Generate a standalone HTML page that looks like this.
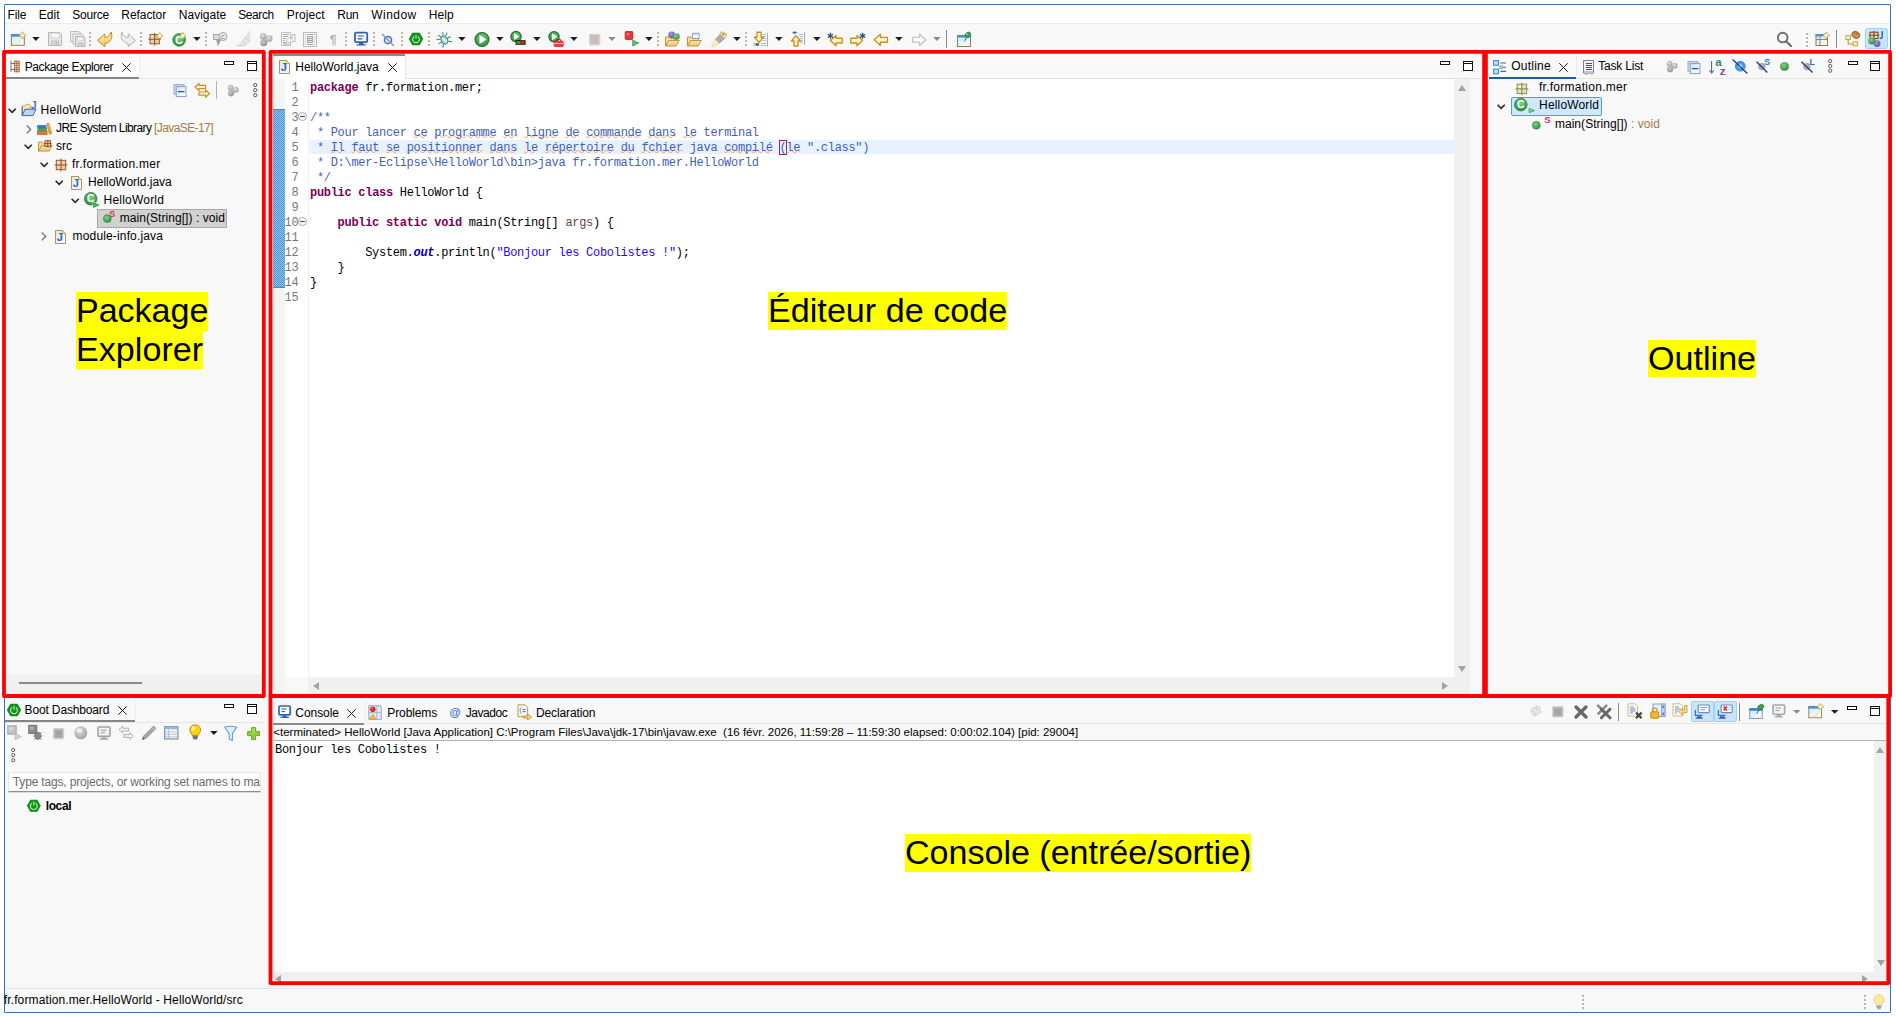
<!DOCTYPE html>
<html lang="fr"><head><meta charset="utf-8"><title>Eclipse IDE - HelloWorld</title>
<style>
html,body{margin:0;padding:0;background:#fff;}
body{width:1896px;height:1016px;position:relative;overflow:hidden;font-family:"Liberation Sans", sans-serif;}
body>div,body>svg,body>span,body>pre{position:absolute;display:block;}
.t{white-space:pre;font-family:"Liberation Sans", sans-serif;}
.m{font-family:"Liberation Mono", monospace;}
svg{overflow:visible;}
</style></head>
<body>
<div style="left:4px;top:4px;width:1885px;height:1007px;border:1px solid #3d6eb5;background:#f8f8f8;border-radius:1px"></div>
<div style="left:5px;top:5px;width:1885px;height:18px;background:#ffffff;"></div>
<div style="left:5px;top:23px;width:1885px;height:1px;background:#ececec;"></div>
<div style="left:6px;top:54px;width:133px;height:23px;background:#fbfbfb;"></div>
<div style="left:5px;top:78px;width:260px;height:1px;background:#e9e9e9;"></div>
<div style="left:6px;top:77px;width:133px;height:2px;background:#858585;"></div>
<div style="left:139px;top:54px;width:1px;height:23px;background:#ededed;"></div>
<div style="left:6px;top:675px;width:256px;height:18px;background:#f0f0f0;"></div>
<div style="left:19px;top:682px;width:123px;height:2px;background:#8a8a8a;"></div>
<div style="left:97px;top:209px;width:128px;height:17px;background:#d1d1d1;border:1px solid #a9a9a9"></div>
<div style="left:273px;top:54px;width:1209px;height:24px;background:#f8f8f8;"></div>
<div style="left:273px;top:78px;width:1209px;height:1px;background:#e2e2e2;"></div>
<div style="left:273px;top:79px;width:1181px;height:598px;background:#ffffff;"></div>
<div style="left:273px;top:79px;width:12px;height:615px;background:#f4f4f4;"></div>
<div style="left:308px;top:79px;width:1px;height:598px;background:#f3f3f3;"></div>
<div style="left:285px;top:677px;width:23px;height:17px;background:#f8f8f8;"></div>
<div style="left:1454px;top:79px;width:16px;height:615px;background:#f0f0f0;"></div>
<div style="left:308px;top:677px;width:1146px;height:17px;background:#f0f0f0;"></div>
<div style="left:1470px;top:79px;width:12px;height:615px;background:#f8f8f8;"></div>
<div style="left:273px;top:54px;width:132px;height:25px;background:#ffffff;"></div>
<div style="left:273px;top:54px;width:132px;height:2px;background:#8a8a8a;"></div>
<div style="left:405px;top:56px;width:1px;height:22px;background:#e6e6e6;"></div>
<div style="left:309px;top:139.5px;width:1145px;height:14.5px;background:#e8f2fe;"></div>
<svg style="left:273px;top:109px" width="12" height="179" viewBox="0 0 12 179"><defs><pattern id="dz" width="2" height="2" patternUnits="userSpaceOnUse"><rect width="2" height="2" fill="#8fc0ea"/><rect width="1" height="1" fill="#4f97d8"/><rect x="1" y="1" width="1" height="1" fill="#4f97d8"/></pattern></defs><rect width="12" height="179" fill="url(#dz)"/><rect width="12" height="1" fill="#3f87cf"/><rect y="178" width="12" height="1" fill="#3f87cf"/></svg>
<div style="left:1488px;top:78px;width:400px;height:1px;background:#e6e6e6;"></div>
<div style="left:1489px;top:77px;width:87px;height:2px;background:#1f56b8;"></div>
<div style="left:1576px;top:56px;width:1px;height:20px;background:#e9e9e9;"></div>
<div style="left:1511px;top:97px;width:89px;height:17px;background:#cde8ff;border:1px solid #4f9be6;border-radius:2px"></div>
<div style="left:5px;top:722px;width:260px;height:1px;background:#e6e6e6;"></div>
<div style="left:5px;top:720px;width:130px;height:2px;background:#858585;"></div>
<div style="left:135px;top:699px;width:1px;height:21px;background:#ededed;"></div>
<div style="left:8px;top:772px;width:251px;height:18px;background:#ffffff;border:1px solid #e6e6e6;border-bottom:1px solid #8e8e8e;box-shadow:0 1px 0 #dcdcdc"></div>
<div style="left:273px;top:723px;width:1613px;height:1px;background:#e6e6e6;"></div>
<div style="left:273px;top:723px;width:91px;height:2px;background:#8a8a8a;"></div>
<div style="left:365px;top:701px;width:1px;height:20px;background:#ededed;"></div>
<div style="left:273px;top:740px;width:1613px;height:1px;background:#b2b2b2;"></div>
<div style="left:273px;top:741px;width:1601px;height:231px;background:#ffffff;"></div>
<div style="left:1874px;top:741px;width:12px;height:231px;background:#f0f0f0;"></div>
<div style="left:273px;top:972px;width:1613px;height:13px;background:#f0f0f0;"></div>
<div style="left:1691px;top:701px;width:21px;height:19px;background:#cce4f7;border:1px solid #99d1ff;border-radius:2px"></div>
<div style="left:1714px;top:701px;width:21px;height:19px;background:#cce4f7;border:1px solid #99d1ff;border-radius:2px"></div>
<div style="left:5px;top:988px;width:1885px;height:1px;background:#e4e4e4;"></div>
<div style="left:267px;top:698px;width:1px;height:290px;background:#efefef;"></div>
<div style="left:1865px;top:28px;width:21px;height:19px;background:#cce4f7;border:1px solid #99d1ff;border-radius:3px"></div>
<svg style="left:0;top:0" width="0" height="0"><defs>
<linearGradient id="gWin" x1="0" y1="0" x2="1" y2="1"><stop offset="0" stop-color="#cfe6f8"/><stop offset="1" stop-color="#ffffff"/></linearGradient>
<linearGradient id="gYel" x1="0" y1="0" x2="0" y2="1"><stop offset="0" stop-color="#fff0ba"/><stop offset="1" stop-color="#f5c252"/></linearGradient>
<linearGradient id="gFold" x1="0" y1="0" x2="0" y2="1"><stop offset="0" stop-color="#fbe7b0"/><stop offset="1" stop-color="#eec66e"/></linearGradient>
<radialGradient id="gGrn" cx=".4" cy=".35" r=".7"><stop offset="0" stop-color="#7fd08a"/><stop offset="1" stop-color="#2e8b3d"/></radialGradient>
<radialGradient id="gPur" cx=".4" cy=".35" r=".7"><stop offset="0" stop-color="#a99ae0"/><stop offset="1" stop-color="#5b4aa8"/></radialGradient>
<radialGradient id="gGry" cx=".4" cy=".35" r=".7"><stop offset="0" stop-color="#e0e0e0"/><stop offset="1" stop-color="#9e9e9e"/></radialGradient>
<radialGradient id="gGry2" cx=".4" cy=".35" r=".7"><stop offset="0" stop-color="#c8c8c8"/><stop offset="1" stop-color="#8e8e8e"/></radialGradient>
<radialGradient id="gRun" cx=".5" cy=".4" r=".65"><stop offset="0" stop-color="#7fd088"/><stop offset=".7" stop-color="#3f9f4c"/><stop offset="1" stop-color="#2a8036"/></radialGradient>
</defs></svg>
<svg style="left:10px;top:31px" width="16" height="16" viewBox="0 0 16 16"><rect x="1.4" y="3.5" width="12.9" height="10.8" fill="url(#gWin)" stroke="#8f7e52"/><rect x=".9" y="3" width="13.9" height="2.7" fill="#4892d4"/><path d="M4 13.6C8.5 13.2 10.6 10.6 11 7" stroke="#f4e2a8" stroke-width="1.3" fill="none"/><path d="M12.6 0.9000000000000004L14.0 3.0L16.1 4.4L14.0 5.800000000000001L12.6 7.9L11.2 5.800000000000001L9.1 4.4L11.2 3.0Z" fill="#fff8d6" stroke="#c9a03c" stroke-width=".9" stroke-linejoin="round"/></svg>
<svg style="left:32.3px;top:37px" width="8" height="5" viewBox="0 0 8 5"><path d="M.2 0H7.6L3.9 4.1Z" fill="#1c1c1c"/></svg>
<svg style="left:46.8px;top:31px" width="16" height="16" viewBox="0 0 16 16"><path d="M1.5 1.5H13L14.5 3V14.5H1.5Z" fill="#e6e6e6" stroke="#b6b6b6"/><rect x="4" y="2" width="8" height="5" fill="#f6f6f6" stroke="#c8c8c8" stroke-width=".7"/><rect x="4.5" y="10" width="7" height="4.5" fill="#d6d6d6" stroke="#b6b6b6" stroke-width=".7"/><rect x="8.5" y="11" width="1.6" height="2.6" fill="#bdbdbd"/></svg>
<svg style="left:69.6px;top:31px" width="16" height="16" viewBox="0 0 16 16"><path d="M.5 .5H9L10.5 2V10.5H.5Z" fill="#ededed" stroke="#bcbcbc"/><path d="M3 3H11.5L13 4.5V13H3Z" fill="#ededed" stroke="#bcbcbc"/><path d="M5.5 5.5H13.5L15 7V15.5H5.5Z" fill="#e6e6e6" stroke="#b6b6b6"/><rect x="7.5" y="6" width="5.5" height="3.5" fill="#f6f6f6" stroke="#c8c8c8" stroke-width=".6"/><rect x="8" y="12" width="5" height="3.5" fill="#d2d2d2" stroke="#b6b6b6" stroke-width=".6"/></svg>
<svg style="left:89px;top:32px" width="2" height="16" viewBox="0 0 2 16"><rect x="0" y="0" width="2" height="2" fill="#bfb49c"/><rect x="0" y="4" width="2" height="2" fill="#bfb49c"/><rect x="0" y="8" width="2" height="2" fill="#bfb49c"/><rect x="0" y="12" width="2" height="2" fill="#bfb49c"/></svg>
<svg style="left:97px;top:31px" width="16" height="16" viewBox="0 0 16 16"><path d="M.5 9.4L7.8 2.9V6.5C10.6 6.6 13.2 4.6 14 1C16.4 6.4 13.4 12 7.8 12.4V15.8Z" fill="url(#gYel)" stroke="#c08a2c" stroke-width="1" stroke-linejoin="round"/></svg>
<svg style="left:119.6px;top:31px" width="16" height="16" viewBox="0 0 16 16"><path d="M15.5 9.4L8.2 2.9V6.5C5.4 6.6 2.8 4.6 2 1C-.4 6.4 2.6 12 8.2 12.4V15.8Z" fill="#ececec" stroke="#b2b2b2" stroke-width="1" stroke-linejoin="round"/></svg>
<svg style="left:140px;top:32px" width="2" height="16" viewBox="0 0 2 16"><rect x="0" y="0" width="2" height="2" fill="#bfb49c"/><rect x="0" y="4" width="2" height="2" fill="#bfb49c"/><rect x="0" y="8" width="2" height="2" fill="#bfb49c"/><rect x="0" y="12" width="2" height="2" fill="#bfb49c"/></svg>
<svg style="left:147.6px;top:31px" width="16" height="16" viewBox="0 0 16 16"><rect x="2.04" y="3.54" width="9.32" height="9.32" fill="#ecd0a4" stroke="#8f4e28" stroke-width=".9"/><path d="M6.70 1.9V14.5M0.4 8.20H13.0" stroke="#8f4e28" stroke-width="1"/><rect x="2.94" y="4.44" width="2.86" height="2.86" fill="#fff" opacity=".35"/><path d="M11.6 1.5L12.92 3.4799999999999995L14.899999999999999 4.8L12.92 6.12L11.6 8.1L10.28 6.12L8.3 4.8L10.28 3.4799999999999995Z" fill="#fff8d6" stroke="#c9a03c" stroke-width=".9" stroke-linejoin="round"/></svg>
<svg style="left:171.6px;top:31px" width="16" height="16" viewBox="0 0 16 16"><circle cx="7.1" cy="8.9" r="6.3" fill="url(#gRun)" stroke="#2b7d36" stroke-width=".8"/><text x="7.1" y="12.65" font-size="10.5" font-weight="bold" fill="#fff" text-anchor="middle" font-family="'Liberation Sans',sans-serif">C</text><path d="M10.8 1.5L12.120000000000001 3.4799999999999995L14.100000000000001 4.8L12.120000000000001 6.12L10.8 8.1L9.48 6.12L7.500000000000001 4.8L9.48 3.4799999999999995Z" fill="#fff8d6" stroke="#c9a03c" stroke-width=".9" stroke-linejoin="round"/></svg>
<svg style="left:192.6px;top:37px" width="8" height="5" viewBox="0 0 8 5"><path d="M.2 0H7.6L3.9 4.1Z" fill="#1c1c1c"/></svg>
<svg style="left:205px;top:32px" width="2" height="16" viewBox="0 0 2 16"><rect x="0" y="0" width="2" height="2" fill="#bfb49c"/><rect x="0" y="4" width="2" height="2" fill="#bfb49c"/><rect x="0" y="8" width="2" height="2" fill="#bfb49c"/><rect x="0" y="12" width="2" height="2" fill="#bfb49c"/></svg>
<svg style="left:212px;top:31px" width="16" height="16" viewBox="0 0 16 16"><rect x="1.5" y="3.5" width="7" height="5" fill="#dcdcdc" stroke="#a8a8a8"/><circle cx="11" cy="5.5" r="4" fill="#ececec" stroke="#a2a2a2"/><text x="11" y="8" font-size="6" font-weight="bold" fill="#9a9a9a" text-anchor="middle" font-family="'Liberation Sans',sans-serif">C</text><path d="M4 8.5H9L6 15.5Z" fill="#9e9e9e"/></svg>
<svg style="left:234.6px;top:31px" width="16" height="16" viewBox="0 0 16 16"><path d="M3.6 14.4L14.8 .6V10L10.6 14.4Z" fill="#e6e6e6" stroke="#d0d0d0" stroke-width=".6"/><path d="M9.4 7.2L14.8 9.6M7 10.2L11 14" stroke="#cfcfcf" stroke-width=".8"/><path d="M.4 14.8H9" stroke="#cfcfcf"/></svg>
<svg style="left:257.6px;top:31px" width="16" height="16" viewBox="0 0 16 16"><circle cx="5.2" cy="5.4" r="3.3" fill="url(#gGry)"/><circle cx="11.2" cy="7.6" r="3.3" fill="url(#gGry)"/><circle cx="5.8" cy="11.8" r="3.5" fill="url(#gGry2)"/></svg>
<svg style="left:280px;top:31px" width="16" height="16" viewBox="0 0 16 16"><path d="M1.5 1.5H10.5V14.5H1.5Z" fill="#fbfbfb" stroke="#c2c2c2"/><path d="M3 3.5H9M3 5.5H8M3 7.5H6M3 9.5H5M3 11.5H7M3 13H9" stroke="#a8a8a8" stroke-width="1"/><path d="M12 3.5H15V10.5H10.5V13L6.2 9.2L10.5 5.4V7.8H12Z" fill="#f6f6f6" stroke="#b4b4b4" stroke-width=".9" stroke-linejoin="round"/></svg>
<svg style="left:302px;top:31px" width="16" height="16" viewBox="0 0 16 16"><rect x="1.5" y="1.5" width="13" height="14" fill="#f6f6f6" stroke="#bcbcbc"/><path d="M4.5 3.5H11.5M4.5 13.5H11.5" stroke="#b0b0b0"/><rect x="5.5" y="5.5" width="5" height="6" fill="#e4e4e4" stroke="#a8a8a8"/><path d="M6 7.5H10M6 9.5H10" stroke="#a0a0a0"/><path d="M3.3 3V14M12.7 3V14" stroke="#b8b8b8" stroke-width="1" stroke-dasharray="1 1.2"/></svg>
<svg style="left:324.6px;top:31px" width="16" height="16" viewBox="0 0 16 16"><text x="8.2" y="12.8" font-size="12.5" font-weight="bold" fill="#b2b2b2" text-anchor="middle" font-family="'Liberation Sans',sans-serif">¶</text></svg>
<svg style="left:345px;top:32px" width="2" height="16" viewBox="0 0 2 16"><rect x="0" y="0" width="2" height="2" fill="#bfb49c"/><rect x="0" y="4" width="2" height="2" fill="#bfb49c"/><rect x="0" y="8" width="2" height="2" fill="#bfb49c"/><rect x="0" y="12" width="2" height="2" fill="#bfb49c"/></svg>
<svg style="left:352.6px;top:31px" width="16" height="16" viewBox="0 0 16 16"><rect x="2" y="1.6" width="12.2" height="9.6" rx="1.2" fill="#ffffff" stroke="#2f62ad" stroke-width="1.8"/><path d="M4.6 5H11M4.6 7.8H9.4" stroke="#34528f" stroke-width="1.2"/><path d="M6 12H10.4V13.2H6Z M3.6 13.2H12.8V14.4H3.6Z" fill="#2f62ad"/></svg>
<svg style="left:373px;top:32px" width="2" height="16" viewBox="0 0 2 16"><rect x="0" y="0" width="2" height="2" fill="#bfb49c"/><rect x="0" y="4" width="2" height="2" fill="#bfb49c"/><rect x="0" y="8" width="2" height="2" fill="#bfb49c"/><rect x="0" y="12" width="2" height="2" fill="#bfb49c"/></svg>
<svg style="left:380.4px;top:31px" width="16" height="16" viewBox="0 0 16 16"><circle cx="8" cy="9" r="3.6" fill="#d7e6f6" stroke="#3c78c0" stroke-width="1.5"/><path d="M2 3L14 15" stroke="#8a8f98" stroke-width="1.3"/></svg>
<svg style="left:401px;top:32px" width="2" height="16" viewBox="0 0 2 16"><rect x="0" y="0" width="2" height="2" fill="#bfb49c"/><rect x="0" y="4" width="2" height="2" fill="#bfb49c"/><rect x="0" y="8" width="2" height="2" fill="#bfb49c"/><rect x="0" y="12" width="2" height="2" fill="#bfb49c"/></svg>
<svg style="left:408px;top:31px" width="16" height="16" viewBox="0 0 16 16"><polygon points="14.90,8.00 11.45,13.98 4.55,13.98 1.10,8.00 4.55,2.02 11.45,2.02" fill="#0c9216" stroke="#0a8212" stroke-width=".6" stroke-linejoin="round"/><path d="M5.9 5.6A3.4 3.4 0 1 0 10.1 5.6" fill="none" stroke="#bfe9c5" stroke-width="1.1" stroke-linecap="round"/><path d="M8 4V7.4" stroke="#bfe9c5" stroke-width="1.1" stroke-linecap="round"/></svg>
<svg style="left:428px;top:32px" width="2" height="16" viewBox="0 0 2 16"><rect x="0" y="0" width="2" height="2" fill="#bfb49c"/><rect x="0" y="4" width="2" height="2" fill="#bfb49c"/><rect x="0" y="8" width="2" height="2" fill="#bfb49c"/><rect x="0" y="12" width="2" height="2" fill="#bfb49c"/></svg>
<svg style="left:436.4px;top:31px" width="16" height="16" viewBox="0 0 16 16"><g transform="rotate(-32 8.4 9)"><path d="M5.6 6.4L2.2 4.4M11.2 6.4L14.6 4.4M5.2 9.2H1.4M11.6 9.2H15.4M5.8 12L2.8 14.6M11 12L14 14.6M7.2 5L5.8 1.6M9.6 5L11 1.6" stroke="#2c7f96" stroke-width="1"/><ellipse cx="8.4" cy="9" rx="3.1" ry="4.3" fill="#b9dcc0" stroke="#2e7f92" stroke-width="1"/><path d="M7.2 6.6L9.6 11.4" stroke="#eef8ee" stroke-width="1.4"/></g></svg>
<svg style="left:458.4px;top:37px" width="8" height="5" viewBox="0 0 8 5"><path d="M.2 0H7.6L3.9 4.1Z" fill="#1c1c1c"/></svg>
<svg style="left:474px;top:31px" width="16" height="16" viewBox="0 0 16 16"><circle cx="8" cy="8.5" r="7" fill="url(#gRun)" stroke="#256f30" stroke-width="1.1"/><path d="M5.48 4.02L12.48 8.5L5.48 12.98Z" fill="#fff"/></svg>
<svg style="left:495.6px;top:37px" width="8" height="5" viewBox="0 0 8 5"><path d="M.2 0H7.6L3.9 4.1Z" fill="#1c1c1c"/></svg>
<svg style="left:510.4px;top:31px" width="16" height="16" viewBox="0 0 16 16"><circle cx="6" cy="5.6" r="5.2" fill="url(#gRun)" stroke="#256f30" stroke-width="1.1"/><path d="M4.13 2.27L9.33 5.6L4.13 8.93Z" fill="#fff"/><rect x="5.6" y="9.2" width="10" height="4.6" fill="#111"/><rect x="6.5" y="10.1" width="4.1" height="2.8" fill="#22b02e"/><rect x="10.6" y="10.1" width="4.1" height="2.8" fill="#e02020"/></svg>
<svg style="left:532.8px;top:37px" width="8" height="5" viewBox="0 0 8 5"><path d="M.2 0H7.6L3.9 4.1Z" fill="#1c1c1c"/></svg>
<svg style="left:548.4px;top:31px" width="16" height="16" viewBox="0 0 16 16"><circle cx="6" cy="5.8" r="5.2" fill="url(#gRun)" stroke="#256f30" stroke-width="1.1"/><path d="M4.13 2.47L9.33 5.8L4.13 9.13Z" fill="#fff"/><rect x="6.2" y="10.2" width="9" height="5.2" rx=".8" fill="#f04040" stroke="#c01818" stroke-width=".8"/><path d="M8.8 10V8.6H12.6V10" fill="none" stroke="#c01818" stroke-width="1"/><path d="M6.2 12.5H15.2" stroke="#fbdada" stroke-width=".9"/></svg>
<svg style="left:570.4px;top:37px" width="8" height="5" viewBox="0 0 8 5"><path d="M.2 0H7.6L3.9 4.1Z" fill="#1c1c1c"/></svg>
<svg style="left:586.6px;top:31px" width="16" height="16" viewBox="0 0 16 16"><rect x="2.6" y="3.4" width="10.2" height="10.4" rx=".8" fill="#cbbcc0" stroke="#dcd4d4" stroke-width="1.2"/></svg>
<svg style="left:607.8px;top:37px" width="8" height="5" viewBox="0 0 8 5"><path d="M.2 0H7.6L3.9 4.1Z" fill="#8a8a8a"/></svg>
<svg style="left:624px;top:31px" width="16" height="16" viewBox="0 0 16 16"><rect x="1.2" y=".6" width="7.6" height="7.8" rx=".8" fill="#e4343e" stroke="#c02430" stroke-width=".9"/><rect x="2.4" y="1.8" width="3.2" height="2.8" fill="#f07a80" opacity=".7"/><path d="M8.6 9L15 12L8.6 15Z" fill="#5fc06a" stroke="#3a9a46" stroke-width=".7"/></svg>
<svg style="left:645.4px;top:37px" width="8" height="5" viewBox="0 0 8 5"><path d="M.2 0H7.6L3.9 4.1Z" fill="#1c1c1c"/></svg>
<svg style="left:657px;top:32px" width="2" height="16" viewBox="0 0 2 16"><rect x="0" y="0" width="2" height="2" fill="#bfb49c"/><rect x="0" y="4" width="2" height="2" fill="#bfb49c"/><rect x="0" y="8" width="2" height="2" fill="#bfb49c"/><rect x="0" y="12" width="2" height="2" fill="#bfb49c"/></svg>
<svg style="left:664px;top:31px" width="16" height="16" viewBox="0 0 16 16"><g transform="translate(0,1.5)"><path d="M1.5 13.5V4.5H5.5L6.8 6H12.5V8" fill="#f7dc9a" stroke="#c28a2c" stroke-width=".9"/><path d="M1.5 13.5L4.6 8H15.2L12 13.5Z" fill="url(#gFold)" stroke="#c28a2c" stroke-width=".9" stroke-linejoin="round"/></g><circle cx="7.6" cy="3.8" r="3.3" fill="url(#gPur)"/><circle cx="12.4" cy="5.6" r="3.3" fill="url(#gGrn)"/></svg>
<svg style="left:686.4px;top:31px" width="16" height="16" viewBox="0 0 16 16"><g transform="translate(0,1.5)"><path d="M1.5 13.5V4.5H5.5L6.8 6H12.5V8" fill="#f7dc9a" stroke="#c28a2c" stroke-width=".9"/><path d="M1.5 13.5L4.6 8H15.2L12 13.5Z" fill="url(#gFold)" stroke="#c28a2c" stroke-width=".9" stroke-linejoin="round"/></g><rect x="6.5" y="2.2" width="6.6" height="5.2" fill="#f4f8fd" stroke="#7f9fd0" stroke-width=".9"/><rect x="6.5" y="2.2" width="6.6" height="1.4" fill="#9db8e0"/></svg>
<svg style="left:710.6px;top:31px" width="16" height="16" viewBox="0 0 16 16"><path d="M10 .8L15.4 2.8L14.6 6.6L9 9.2Z" fill="#fbe3a0" stroke="#c89a3c" stroke-width=".8"/><path d="M9 3.4L13.2 7.8L8.2 12.2L4.4 8.4Z" fill="#b0acb4" stroke="#8c8890" stroke-width=".7"/><path d="M4.4 8.6L8 12.2L2.2 15.6C1 16 .4 15.2 1 14Z" fill="#fff3c4" stroke="#e8c060" stroke-width=".7"/><circle cx="12.4" cy="3.4" r=".9" fill="#3a7ac8"/></svg>
<svg style="left:733px;top:37px" width="8" height="5" viewBox="0 0 8 5"><path d="M.2 0H7.6L3.9 4.1Z" fill="#1c1c1c"/></svg>
<svg style="left:745px;top:32px" width="2" height="16" viewBox="0 0 2 16"><rect x="0" y="0" width="2" height="2" fill="#bfb49c"/><rect x="0" y="4" width="2" height="2" fill="#bfb49c"/><rect x="0" y="8" width="2" height="2" fill="#bfb49c"/><rect x="0" y="12" width="2" height="2" fill="#bfb49c"/></svg>
<svg style="left:753px;top:31px" width="16" height="16" viewBox="0 0 16 16"><path d="M9.5 3.5H13M10 5.5H13M10 7.5H13M10 9.5H13M8 12.5H13M8 14.5H13" stroke="#9db4d4" stroke-width=".9"/><path d="M14.5 2V15.5" stroke="#8aa4c8" stroke-width=".9"/><path d="M4 1.2H8V6.2H10.6L6 11.4L1.4 6.2H4Z" fill="#fff6d2" stroke="#c98f24" stroke-width="1.35" stroke-linejoin="round"/><rect x="2.5" y="12.2" width="3.6" height="2.6" fill="#2f6cc0"/><path d="M1.2 11.5V15.5" stroke="#8aa4c8" stroke-width=".9"/></svg>
<svg style="left:775.2px;top:37px" width="8" height="5" viewBox="0 0 8 5"><path d="M.2 0H7.6L3.9 4.1Z" fill="#1c1c1c"/></svg>
<svg style="left:790px;top:31px" width="16" height="16" viewBox="0 0 16 16"><path d="M2 1.5H8" stroke="#9db4d4" stroke-width=".9"/><rect x="3" y=".6" width="3.2" height="2" fill="#2f6cc0"/><path d="M9 3.5H13M9.5 5.5H13M10 7.5H13M10 9.5H13M10 11.5H13" stroke="#9db4d4" stroke-width=".9"/><path d="M14.5 1V14" stroke="#8aa4c8" stroke-width=".9"/><path d="M4 15H8V10H10.6L6 4.8L1.4 10H4Z" fill="#fff6d2" stroke="#c98f24" stroke-width="1.35" stroke-linejoin="round"/></svg>
<svg style="left:812.6px;top:37px" width="8" height="5" viewBox="0 0 8 5"><path d="M.2 0H7.6L3.9 4.1Z" fill="#1c1c1c"/></svg>
<svg style="left:826.6px;top:31px" width="16" height="16" viewBox="0 0 16 16"><path d="M3.4 9.6L9 4.4V7.2H15.2V12H9V14.8Z" fill="#fff6d2" stroke="#c98f24" stroke-width="1.35" stroke-linejoin="round"/><path d="M3.4 1.7999999999999998V7.8M0.7999999999999998 3.1999999999999997L6.0 6.4M0.7999999999999998 6.4L6.0 3.1999999999999997" stroke="#2a4f8c" stroke-width="1.25"/></svg>
<svg style="left:849.6px;top:31px" width="16" height="16" viewBox="0 0 16 16"><path d="M12.6 9.6L7 4.4V7.2H.8V12H7V14.8Z" fill="#fff6d2" stroke="#c98f24" stroke-width="1.35" stroke-linejoin="round"/><path d="M12.6 1.7999999999999998V7.8M10.0 3.1999999999999997L15.2 6.4M10.0 6.4L15.2 3.1999999999999997" stroke="#2a4f8c" stroke-width="1.25"/></svg>
<svg style="left:873px;top:31px" width="16" height="16" viewBox="0 0 16 16"><path d="M1.2 8.8L7.4 3.2V6.4H14.4V11.2H7.4V14.4Z" fill="#fff6d2" stroke="#c98f24" stroke-width="1.35" stroke-linejoin="round"/></svg>
<svg style="left:895.4px;top:37px" width="8" height="5" viewBox="0 0 8 5"><path d="M.2 0H7.6L3.9 4.1Z" fill="#1c1c1c"/></svg>
<svg style="left:910.6px;top:31px" width="16" height="16" viewBox="0 0 16 16"><path d="M14.8 8.8L8.6 3.2V6.4H1.6V11.2H8.6V14.4Z" fill="#fbfbfb" stroke="#c4c4c4" stroke-width="1.3" stroke-linejoin="round"/></svg>
<svg style="left:932.6px;top:37px" width="8" height="5" viewBox="0 0 8 5"><path d="M.2 0H7.6L3.9 4.1Z" fill="#8a8a8a"/></svg>
<svg style="left:956px;top:31px" width="16" height="16" viewBox="0 0 16 16"><rect x="1.5" y="4.5" width="13" height="11" fill="url(#gWin)" stroke="#8f7e52"/><rect x="1" y="4" width="14" height="2.6" fill="#4892d4"/><path d="M8.4 10.4L10.6 6.4" stroke="#555" stroke-width="1"/><ellipse cx="11.8" cy="3.8" rx="3.1" ry="2.3" transform="rotate(-35 11.8 3.8)" fill="#3fa048" stroke="#2a7d34" stroke-width=".7"/><ellipse cx="11" cy="3.2" rx="1.2" ry=".7" transform="rotate(-35 11 3.2)" fill="#9fdca6"/></svg>
<div style="left:946px;top:30px;width:1px;height:18px;background:#8a8a8a;"></div>
<svg style="left:1776px;top:31px" width="16" height="16" viewBox="0 0 16 16"><circle cx="6.7" cy="6.6" r="4.8" fill="none" stroke="#6c6c6c" stroke-width="1.9"/><path d="M10.2 10.2L15 15" stroke="#6c6c6c" stroke-width="2.2" stroke-linecap="round"/></svg>
<svg style="left:1806px;top:33px" width="2" height="16" viewBox="0 0 2 16"><rect x="0" y="0" width="2" height="2" fill="#bfb49c"/><rect x="0" y="4" width="2" height="2" fill="#bfb49c"/><rect x="0" y="8" width="2" height="2" fill="#bfb49c"/><rect x="0" y="12" width="2" height="2" fill="#bfb49c"/></svg>
<svg style="left:1814.5px;top:31px" width="16" height="16" viewBox="0 0 16 16"><rect x="1" y="3.5" width="11.5" height="11" fill="url(#gWin)" stroke="#8f7e52"/><rect x=".6" y="3" width="12.4" height="2.4" fill="#4892d4"/><path d="M1 8.5H12.5M5 5.5V14.5" stroke="#8f7e52" stroke-width=".9"/><path d="M11.2 1.0000000000000004L12.559999999999999 3.04L14.6 4.4L12.559999999999999 5.760000000000001L11.2 7.800000000000001L9.84 5.760000000000001L7.799999999999999 4.4L9.84 3.04Z" fill="#fff8d6" stroke="#c9a03c" stroke-width=".9" stroke-linejoin="round"/></svg>
<div style="left:1836px;top:30px;width:1px;height:18px;background:#8a8a8a;"></div>
<svg style="left:1845px;top:31px" width="16" height="16" viewBox="0 0 16 16"><path d="M3.2 8V13H8" stroke="#b99a3a" stroke-width="1.2" fill="none"/><rect x=".9" y="4.6" width="4.6" height="4" fill="#fdeeb0" stroke="#c9a02c" stroke-width=".9"/><rect x="8" y="10.8" width="4.6" height="4" fill="#fdeeb0" stroke="#c9a02c" stroke-width=".9"/><ellipse cx="10.8" cy="3.9" rx="4.2" ry="3.3" transform="rotate(30 10.8 3.9)" fill="#b8763e" stroke="#8a4f22" stroke-width=".7"/><path d="M8 2.2L13.8 5.2M7.6 3.9L13 6.8" stroke="#e8b070" stroke-width=".8"/></svg>
<svg style="left:1868px;top:30px" width="16" height="18" viewBox="0 0 16 18"><rect x="2" y="2.2" width="8" height="6.4" fill="#f0d9b4" stroke="#7a3c1c" stroke-width="1"/><path d="M6 1V9M.8 5.2H11.2" stroke="#7a3c1c" stroke-width="1.1"/><path d="M14.2 1.2V6.4C14.2 7.8 13.4 8.4 11.6 8.4" fill="none" stroke="#2f66a8" stroke-width="1.5"/><circle cx="9" cy="13.6" r="3.4" fill="url(#gPur)"/><circle cx="3.8" cy="10.8" r="3.6" fill="url(#gGrn)"/></svg>
<svg style="left:9.6px;top:60px" width="10" height="13" viewBox="0 0 10 13"><path d="M1 .5V12M1 3.5H4M1 9.5H4" stroke="#6a7480" stroke-width="1" fill="none"/><rect x="4.4" y="1.2" width="4.8" height="4.6" fill="#f0d2a4" stroke="#a8602c" stroke-width=".9"/><path d="M6.8 .8V6.2M4 3.5H9.6" stroke="#a8602c" stroke-width=".8"/><rect x="4.4" y="7.2" width="4.8" height="4.6" fill="#f0d2a4" stroke="#a8602c" stroke-width=".9"/><path d="M6.8 6.8V12.2M4 9.5H9.6" stroke="#a8602c" stroke-width=".8"/></svg>
<svg style="left:122px;top:63px" width="9" height="9" viewBox="0 0 9 9"><path d="M.3 .3L8.7 8.7M8.7 .3L.3 8.7" stroke="#1a1a1a" stroke-width="1"/></svg>
<div style="left:224.3px;top:61px;width:8px;height:2px;border:1px solid #111;background:#fff"></div>
<div style="left:247px;top:61px;width:8px;height:8px;border:1px solid #111;background:#fbfbfb;box-shadow:inset 0 1px 0 #fbfbfb, inset 0 2px 0 #111"></div>
<svg style="left:172.6px;top:82px" width="16" height="16" viewBox="0 0 16 16"><rect x="1" y="2.6" width="10" height="9.6" fill="#cfe3ea" stroke="#9aa6c6"/><rect x="3.2" y="4.6" width="9.8" height="10" fill="url(#gWin)" stroke="#8e9cc0"/><path d="M4.8 9.6H11.6" stroke="#1f5fa8" stroke-width="1.3"/></svg>
<svg style="left:194px;top:82.4px" width="16" height="16" viewBox="0 0 16 16"><path d="M1 5L5 1.4V3.4H11.6V6.6H5V8.6Z" fill="#fff6d2" stroke="#c98f24" stroke-width="1.2" stroke-linejoin="round"/><path d="M15.6 11.6L11.6 8V10H5V13.2H11.6V15.2Z" fill="#fff6d2" stroke="#c98f24" stroke-width="1.2" stroke-linejoin="round"/></svg>
<div style="left:215.5px;top:81px;width:1.5px;height:18px;background:#b4b4b4;"></div>
<svg style="left:225.6px;top:82.6px" width="14" height="14" viewBox="0 0 16 16"><circle cx="5.2" cy="5.4" r="3.3" fill="url(#gGry)"/><circle cx="11.2" cy="7.6" r="3.3" fill="url(#gGry)"/><circle cx="5.8" cy="11.8" r="3.5" fill="url(#gGry2)"/></svg>
<svg style="left:252.8px;top:82.9px" width="5" height="14.2" viewBox="0 0 5 14.2"><circle cx="2.2" cy="2.0" r="1.6" fill="#fff" stroke="#4a4a4a" stroke-width=".9"/><circle cx="2.2" cy="7.1" r="1.6" fill="#fff" stroke="#4a4a4a" stroke-width=".9"/><circle cx="2.2" cy="12.2" r="1.6" fill="#fff" stroke="#4a4a4a" stroke-width=".9"/></svg>
<svg style="left:8.2px;top:108px" width="9" height="6" viewBox="0 0 9 6"><path d="M.6 .8L4.2 4.4L7.8 .8" fill="none" stroke="#222" stroke-width="1.5"/></svg>
<svg style="left:21px;top:101.6px" width="16" height="15" viewBox="0 0 16 15"><path d="M1.2 13.2V3.8H4.2L5.2 2.4H8.6L9.4 3.8V6.4" fill="#fbe9b8" stroke="#c9a24c" stroke-width=".9"/><path d="M1.2 13.6L4 7.2H15L12 13.6Z" fill="#b9d6f6" stroke="#3f62c0" stroke-width="1" stroke-linejoin="round"/><path d="M1.2 13.6V5" stroke="#3f62c0" stroke-width="1"/><text x="12.8" y="7.2" font-size="10" font-weight="bold" fill="#3a6fb8" text-anchor="middle" font-family="'Liberation Sans',sans-serif">J</text></svg>
<svg style="left:25.6px;top:125px" width="6" height="9" viewBox="0 0 6 9"><path d="M.8 .6L4.6 4.4L.8 8.2" fill="none" stroke="#7a7a7a" stroke-width="1.4"/></svg>
<svg style="left:37px;top:122.6px" width="15" height="12" viewBox="0 0 15 12"><rect x=".6" y="2.4" width="8.4" height="2.4" fill="#2f7fd0" stroke="#1f5fa8" stroke-width=".5"/><rect x=".9" y="5" width="8.8" height="2.6" fill="#3fa878" stroke="#237a52" stroke-width=".5"/><rect x=".3" y="7.9" width="9.8" height="3.6" fill="#d87a3a" stroke="#a8501c" stroke-width=".6"/><path d="M9.6 .8L11.8 .2L14.8 10.6L12.4 11.4Z" fill="#f0a83a" stroke="#c07a1c" stroke-width=".6"/></svg>
<svg style="left:24px;top:144.2px" width="9" height="6" viewBox="0 0 9 6"><path d="M.6 .8L4.2 4.4L7.8 .8" fill="none" stroke="#222" stroke-width="1.5"/></svg>
<svg style="left:36.6px;top:139.2px" width="16" height="15" viewBox="0 0 16 15"><g transform="translate(0,-1.4)"><path d="M1.5 13.5V4.5H5.5L6.8 6H12.5V8" fill="#f7dc9a" stroke="#c28a2c" stroke-width=".9"/><path d="M1.5 13.5L4.6 8H15.2L12 13.5Z" fill="url(#gFold)" stroke="#c28a2c" stroke-width=".9" stroke-linejoin="round"/></g><rect x="7.99" y="1.79" width="5.62" height="5.62" fill="#ecd0a4" stroke="#8a4a24" stroke-width=".9"/><path d="M10.80 0.8V8.4M7 4.60H14.6" stroke="#8a4a24" stroke-width="1"/><rect x="8.89" y="2.69" width="1.01" height="1.01" fill="#fff" opacity=".35"/></svg>
<svg style="left:39.7px;top:162.2px" width="9" height="6" viewBox="0 0 9 6"><path d="M.6 .8L4.2 4.4L7.8 .8" fill="none" stroke="#222" stroke-width="1.5"/></svg>
<svg style="left:53.6px;top:157.6px" width="16" height="16" viewBox="0 0 16 16"><rect x="2.26" y="2.26" width="9.47" height="9.47" fill="#ecd0a4" stroke="#8f4e28" stroke-width=".9"/><path d="M7.00 0.6V13.4M0.6 7.00H13.4" stroke="#8f4e28" stroke-width="1"/><rect x="3.16" y="3.16" width="2.94" height="2.94" fill="#fff" opacity=".35"/></svg>
<svg style="left:55.2px;top:180.2px" width="9" height="6" viewBox="0 0 9 6"><path d="M.6 .8L4.2 4.4L7.8 .8" fill="none" stroke="#222" stroke-width="1.5"/></svg>
<svg style="left:70.4px;top:174.6px" width="13" height="16" viewBox="0 0 13 16"><path d="M1.5 1.5H8.5L11.5 4.5V14.5H1.5Z" fill="url(#gWin)" stroke="#b3954c" stroke-width="1"/><path d="M8.5 1.5V4.5H11.5" fill="#f6e7bc" stroke="#b3954c" stroke-width=".8"/><text x="5.8" y="12.4" font-size="11" font-weight="bold" fill="#2f66a8" text-anchor="middle" font-family="'Liberation Sans',sans-serif">J</text></svg>
<svg style="left:71.2px;top:198.2px" width="9" height="6" viewBox="0 0 9 6"><path d="M.6 .8L4.2 4.4L7.8 .8" fill="none" stroke="#222" stroke-width="1.5"/></svg>
<svg style="left:84.4px;top:192px" width="16" height="16" viewBox="0 0 16 16"><circle cx="6.7" cy="6.7" r="6.3" fill="url(#gRun)" stroke="#2b7d36" stroke-width=".8"/><text x="6.7" y="10.45" font-size="10.5" font-weight="bold" fill="#fff" text-anchor="middle" font-family="'Liberation Sans',sans-serif">C</text><path d="M9.4 10.6L15 13L9.4 15.4Z" fill="#3fae4c" stroke="#fff" stroke-width="1.6" paint-order="stroke" stroke-linejoin="round"/><path d="M9.4 10.6L15 13L9.4 15.4Z" fill="#46b454" stroke="#2a8a36" stroke-width=".6"/></svg>
<svg style="left:103px;top:210px" width="13" height="14" viewBox="0 0 13 14"><circle cx="4.3" cy="8.6" r="4" fill="url(#gGrn)" stroke="#2f8a3c" stroke-width=".5"/><text x="9.2" y="7" font-size="9" font-weight="bold" fill="#e0305a" text-anchor="middle" font-family="'Liberation Sans',sans-serif">S</text></svg>
<svg style="left:41.2px;top:232.4px" width="6" height="9" viewBox="0 0 6 9"><path d="M.8 .6L4.6 4.4L.8 8.2" fill="none" stroke="#7a7a7a" stroke-width="1.4"/></svg>
<svg style="left:54.4px;top:228.6px" width="13" height="16" viewBox="0 0 13 16"><path d="M1.5 1.5H8.5L11.5 4.5V14.5H1.5Z" fill="url(#gWin)" stroke="#b3954c" stroke-width="1"/><path d="M8.5 1.5V4.5H11.5" fill="#f6e7bc" stroke="#b3954c" stroke-width=".8"/><text x="5.8" y="12.4" font-size="11" font-weight="bold" fill="#2f66a8" text-anchor="middle" font-family="'Liberation Sans',sans-serif">J</text></svg>
<svg style="left:278.2px;top:58.8px" width="13" height="16" viewBox="0 0 13 16"><path d="M1.5 1.5H8.5L11.5 4.5V14.5H1.5Z" fill="url(#gWin)" stroke="#b3954c" stroke-width="1"/><path d="M8.5 1.5V4.5H11.5" fill="#f6e7bc" stroke="#b3954c" stroke-width=".8"/><text x="5.8" y="12.4" font-size="11" font-weight="bold" fill="#2f66a8" text-anchor="middle" font-family="'Liberation Sans',sans-serif">J</text></svg>
<svg style="left:387.6px;top:62.6px" width="9" height="9" viewBox="0 0 9 9"><path d="M.3 .3L8.7 8.7M8.7 .3L.3 8.7" stroke="#1a1a1a" stroke-width="1"/></svg>
<div style="left:1440.3px;top:61px;width:8px;height:2px;border:1px solid #111;background:#fff"></div>
<div style="left:1463px;top:61px;width:8px;height:8px;border:1px solid #111;background:#fbfbfb;box-shadow:inset 0 1px 0 #fbfbfb, inset 0 2px 0 #111"></div>
<svg style="left:1458px;top:85px" width="8" height="6" viewBox="0 0 8 6"><path d="M0 6L4 0L8 6Z" fill="#a3a3a3"/></svg>
<svg style="left:1458px;top:666px" width="8" height="6" viewBox="0 0 8 6"><path d="M0 0H8L4 6Z" fill="#a3a3a3"/></svg>
<svg style="left:313px;top:682px" width="6" height="8" viewBox="0 0 6 8"><path d="M6 0V8L0 4Z" fill="#a3a3a3"/></svg>
<svg style="left:1442px;top:682px" width="6" height="8" viewBox="0 0 6 8"><path d="M0 0L6 4L0 8Z" fill="#a3a3a3"/></svg>
<svg style="left:298px;top:111.9px" width="9" height="9" viewBox="0 0 9 9"><circle cx="4.5" cy="4.5" r="4" fill="#fdfdfd" stroke="#9aa2ae" stroke-width=".9"/><path d="M2.1 4.5H6.9" stroke="#4a4a4a" stroke-width="1.1"/></svg>
<svg style="left:298px;top:216.9px" width="9" height="9" viewBox="0 0 9 9"><circle cx="4.5" cy="4.5" r="4" fill="#fdfdfd" stroke="#9aa2ae" stroke-width=".9"/><path d="M2.1 4.5H6.9" stroke="#4a4a4a" stroke-width="1.1"/></svg>
<div style="left:779px;top:139.5px;width:6.4px;height:13.2px;border:1px solid #8a2a5a"></div>
<svg style="left:1493px;top:60.4px" width="14" height="15" viewBox="0 0 14 15"><rect x=".6" y=".6" width="4.8" height="4.6" fill="#bfe0f8" stroke="#2f7fc8" stroke-width="1"/><rect x=".6" y="9.2" width="4.8" height="4.6" fill="#bfe0f8" stroke="#2f7fc8" stroke-width="1"/><path d="M7.4 3H13M10 7.2H13M7.4 11.4H13" stroke="#2f6fb8" stroke-width="1.1"/><rect x="7" y="6" width="2.2" height="2.4" fill="#fff" stroke="#2f6fb8" stroke-width=".7"/></svg>
<svg style="left:1559.2px;top:63px" width="9" height="9" viewBox="0 0 9 9"><path d="M.3 .3L8.7 8.7M8.7 .3L.3 8.7" stroke="#1a1a1a" stroke-width="1"/></svg>
<svg style="left:1583px;top:60px" width="12" height="15" viewBox="0 0 12 15"><path d="M.5 .5H10.5V12.6L8.8 14L6.4 12.6L3.8 14.2L.5 13Z" fill="#f4f4fc" stroke="#7d7d92" stroke-width="1"/><path d="M2.5 3.5H8.5M2.5 5.5H8.5M2.5 7.5H8.5M2.5 9.5H8.5" stroke="#4c4c5e" stroke-width="1" shape-rendering="crispEdges"/><path d="M1 11H10V12.4L8.8 13.4L6.4 12L3.8 13.6L1 12.6Z" fill="#c2c2e6"/></svg>
<svg style="left:1665px;top:59.4px" width="14" height="14" viewBox="0 0 16 16"><circle cx="5.2" cy="5.4" r="3.3" fill="url(#gGry)"/><circle cx="11.2" cy="7.6" r="3.3" fill="url(#gGry)"/><circle cx="5.8" cy="11.8" r="3.5" fill="url(#gGry2)"/></svg>
<svg style="left:1687px;top:58.6px" width="16" height="16" viewBox="0 0 16 16"><rect x="1" y="2.6" width="10" height="9.6" fill="#cfe3ea" stroke="#9aa6c6"/><rect x="3.2" y="4.6" width="9.8" height="10" fill="url(#gWin)" stroke="#8e9cc0"/><path d="M4.8 9.6H11.6" stroke="#1f5fa8" stroke-width="1.3"/></svg>
<svg style="left:1708.6px;top:58.6px" width="17" height="16" viewBox="0 0 17 16"><path d="M2.6 2V13.4M.4 11L2.6 14.4L4.8 11" stroke="#3f5f9a" stroke-width="1" fill="none"/><text x="9.4" y="7" font-size="11.5" font-weight="bold" fill="#1f8a78" text-anchor="middle" font-family="'Liberation Sans',sans-serif">a</text><text x="13.6" y="15.6" font-size="11.5" font-weight="bold" fill="#9a3a9a" text-anchor="middle" font-family="'Liberation Sans',sans-serif">z</text></svg>
<svg style="left:1732px;top:58.6px" width="16" height="16" viewBox="0 0 16 16"><circle cx="8.3" cy="7.2" r="4.9" fill="#3f9fe8" stroke="#2f7fd0" stroke-width=".8"/><circle cx="8.3" cy="7.2" r="2" fill="#cfe8fb"/><path d="M.6 .4L15.4 14.4" stroke="#2a3a8c" stroke-width="1.4"/></svg>
<svg style="left:1755px;top:58.4px" width="16" height="16" viewBox="0 0 16 16"><circle cx="6.8" cy="8.6" r="3.3" fill="#b0b0b0" stroke="#8e8e8e" stroke-width=".6"/><path d="M1.6 3.8L12.4 14.4" stroke="#2a3a8c" stroke-width="1.4"/><text x="12.2" y="6.8" font-size="8.8" font-weight="bold" fill="#3a7ac0" text-anchor="middle" font-family="'Liberation Sans',sans-serif">S</text></svg>
<svg style="left:1780.4px;top:61.6px" width="9" height="9" viewBox="0 0 9 9"><circle cx="4.5" cy="4.5" r="4.1" fill="url(#gGrn)" stroke="#3a8f46" stroke-width=".5"/></svg>
<svg style="left:1800.4px;top:58.4px" width="16" height="16" viewBox="0 0 16 16"><circle cx="6.9" cy="8.6" r="3.3" fill="#b0b0b0" stroke="#8e8e8e" stroke-width=".6"/><path d="M1.4 3.8L12.6 14.4" stroke="#2a3a8c" stroke-width="1.4"/><text x="12.2" y="6.8" font-size="8.6" font-weight="bold" fill="#3a6ab8" text-anchor="middle" font-family="'Liberation Sans',sans-serif">L</text></svg>
<svg style="left:1828px;top:59px" width="5" height="13.8" viewBox="0 0 5 13.8"><circle cx="2.2" cy="2.0" r="1.6" fill="#fff" stroke="#4a4a4a" stroke-width=".9"/><circle cx="2.2" cy="6.9" r="1.6" fill="#fff" stroke="#4a4a4a" stroke-width=".9"/><circle cx="2.2" cy="11.8" r="1.6" fill="#fff" stroke="#4a4a4a" stroke-width=".9"/></svg>
<div style="left:1847.5px;top:61px;width:8px;height:2px;border:1px solid #111;background:#fff"></div>
<div style="left:1870.2px;top:61px;width:8px;height:8px;border:1px solid #111;background:#fbfbfb;box-shadow:inset 0 1px 0 #fbfbfb, inset 0 2px 0 #111"></div>
<svg style="left:1514.6px;top:81.8px" width="14" height="15" viewBox="0 0 14 15"><rect x="2.16" y="2.16" width="9.47" height="9.47" fill="#e6e3b4" stroke="#86834e" stroke-width=".9"/><path d="M6.90 0.5V13.3M0.5 6.90H13.3" stroke="#86834e" stroke-width="1"/><rect x="3.06" y="3.06" width="2.94" height="2.94" fill="#fff" opacity=".35"/></svg>
<svg style="left:1497.2px;top:104.4px" width="9" height="6" viewBox="0 0 9 6"><path d="M.6 .8L4.2 4.4L7.8 .8" fill="none" stroke="#222" stroke-width="1.5"/></svg>
<svg style="left:1513.6px;top:98px" width="22" height="16" viewBox="0 0 22 16"><circle cx="6.8" cy="6.6" r="6.3" fill="url(#gRun)" stroke="#2b7d36" stroke-width=".8"/><text x="6.8" y="10.35" font-size="10.5" font-weight="bold" fill="#fff" text-anchor="middle" font-family="'Liberation Sans',sans-serif">C</text><path d="M15.2 10.6L20.4 12.6L15.2 14.6Z" fill="#9fdba8" stroke="#2f9a3e" stroke-width=".9" stroke-linejoin="round"/></svg>
<svg style="left:1532.4px;top:120.8px" width="9" height="9" viewBox="0 0 9 9"><circle cx="4.3" cy="4.3" r="4" fill="url(#gGrn)" stroke="#2f8a3c" stroke-width=".5"/></svg>
<svg style="left:7.2px;top:703px" width="14" height="14" viewBox="0 0 14 14"><polygon points="13.80,7.00 10.40,12.89 3.60,12.89 0.20,7.00 3.60,1.11 10.40,1.11" fill="#0c9216" stroke="#0a8212" stroke-width=".6" stroke-linejoin="round"/><path d="M4.9 4.6A3.4 3.4 0 1 0 9.1 4.6" fill="none" stroke="#bfe9c5" stroke-width="1.1" stroke-linecap="round"/><path d="M7 3V6.4" stroke="#bfe9c5" stroke-width="1.1" stroke-linecap="round"/></svg>
<svg style="left:118px;top:705.8px" width="9" height="9" viewBox="0 0 9 9"><path d="M.3 .3L8.7 8.7M8.7 .3L.3 8.7" stroke="#1a1a1a" stroke-width="1"/></svg>
<div style="left:224.3px;top:703.8px;width:8px;height:2px;border:1px solid #111;background:#fff"></div>
<div style="left:247px;top:703.8px;width:8px;height:8px;border:1px solid #111;background:#fbfbfb;box-shadow:inset 0 1px 0 #fbfbfb, inset 0 2px 0 #111"></div>
<svg style="left:7px;top:725px" width="16" height="16" viewBox="0 0 16 16"><rect x=".8" y=".8" width="8.4" height="8.4" fill="#c4c4c4" stroke="#a6a6a6"/><rect x="2.2" y="2.2" width="3.4" height="3" fill="#dcdcdc"/><path d="M8 8.4L14.6 11.6L8 14.8Z" fill="#cfcfcf" stroke="#b4b4b4" stroke-width=".6"/></svg>
<svg style="left:28.4px;top:725px" width="16" height="16" viewBox="0 0 16 16"><rect x=".8" y=".4" width="8" height="8" fill="#8c8c8c" stroke="#6e6e6e"/><rect x="2" y="1.6" width="3.4" height="3" fill="#b0b0b0"/><ellipse cx="9.8" cy="10.8" rx="3" ry="3.6" fill="#8a8a8a" stroke="#666" stroke-width=".6"/><path d="M6 7.4L7.8 9M13.6 7.4L11.8 9M5.2 11H7M14.4 11H12.6M6 14.6L7.8 13M13.6 14.6L11.8 13" stroke="#6a6a6a" stroke-width=".9"/></svg>
<svg style="left:53px;top:727.6px" width="12" height="12" viewBox="0 0 12 12"><rect x=".6" y=".6" width="10" height="10" rx=".8" fill="#b4b4b4" stroke="#d0d0d0" stroke-width="1.2"/><rect x="2.4" y="2.4" width="6.4" height="6.4" fill="#a4a4a4"/></svg>
<svg style="left:74.4px;top:726.4px" width="14" height="14" viewBox="0 0 14 14"><circle cx="6.8" cy="6.8" r="6.5" fill="url(#gGry)"/><ellipse cx="5.2" cy="4.4" rx="3" ry="2.2" fill="#f4f4f4" opacity=".8"/></svg>
<svg style="left:96.8px;top:725.6px" width="14" height="14" viewBox="0 0 14 14"><rect x="1" y="1" width="12" height="9.4" rx="1" fill="#f4f4f4" stroke="#a2a2a2" stroke-width="1.6"/><path d="M3.6 4.2H9.6M3.6 6.8H8" stroke="#9a9a9a" stroke-width="1"/><path d="M5 11.4H9V12.6H5ZM2.6 12.6H11.4V13.8H2.6Z" fill="#a2a2a2"/></svg>
<svg style="left:118px;top:725px" width="16" height="16" viewBox="0 0 16 16"><path d="M1 4.6L4.6 1.2V3.2H10.6V6H4.6V8Z" fill="#f2f2f2" stroke="#a8a8a8" stroke-width=".9" stroke-linejoin="round"/><path d="M15.4 11L11.8 7.6V9.6H5.8V12.4H11.8V14.4Z" fill="#f2f2f2" stroke="#a8a8a8" stroke-width=".9" stroke-linejoin="round"/></svg>
<svg style="left:141px;top:725px" width="16" height="16" viewBox="0 0 16 16"><path d="M12.6 1L15 3.4L5 13.4L1.4 14.6L2.6 11Z" fill="#a6a6a6" stroke="#8c8c8c" stroke-width=".7"/><path d="M1.4 14.6L2.2 12.2L3.8 13.8Z" fill="#4a4a4a"/><path d="M11 2.6L13.4 5" stroke="#d8d8d8" stroke-width=".8"/></svg>
<svg style="left:164px;top:725.6px" width="15" height="14" viewBox="0 0 15 14"><rect x=".7" y=".7" width="13.2" height="12.2" fill="#f6f9fd" stroke="#6e86b4" stroke-width="1.1"/><rect x=".7" y=".7" width="13.2" height="2.6" fill="#9fb4d8"/><path d="M4.6 3.4V13M1 6H14M1 8.4H14M1 10.8H14" stroke="#9fb0cc" stroke-width=".7"/></svg>
<svg style="left:188.6px;top:724.4px" width="13" height="16" viewBox="0 0 13 16"><path d="M6.2 .8C9.4 .8 11.6 3.2 11.6 6C11.6 8.4 9.6 9.4 9.2 11.4H3.2C2.8 9.4 .8 8.4 .8 6C.8 3.2 3 .8 6.2 .8Z" fill="#ffd21c" stroke="#b8860b" stroke-width=".9"/><ellipse cx="4.4" cy="4.4" rx="1.8" ry="2.2" fill="#fff3a8"/><path d="M3.6 11.8H8.8V13.6L7.8 15.4H4.6L3.6 13.6Z" fill="#7a6a78"/></svg>
<svg style="left:209.6px;top:730.6px" width="8" height="5" viewBox="0 0 8 5"><path d="M.2 0H7.6L3.9 4.1Z" fill="#1c1c1c"/></svg>
<svg style="left:223.8px;top:725.6px" width="14" height="16" viewBox="0 0 14 16"><path d="M.8 1.2C4 .2 9.6 .2 12.8 1.2L8.4 7.6V14.4L5.2 13V7.6Z" fill="#dfeffc" stroke="#5f9fd8" stroke-width="1.1" stroke-linejoin="round"/></svg>
<svg style="left:246.8px;top:726.6px" width="14" height="14" viewBox="0 0 14 14"><path d="M4.6 .6H8.6V4.6H12.6V8.6H8.6V12.6H4.6V8.6H.6V4.6H4.6Z" fill="#8fd03c" stroke="#5fa01c" stroke-width=".9"/><path d="M5.6 1.6H7.6V5.6H5.6Z" fill="#b8e878" opacity=".7"/></svg>
<svg style="left:10.6px;top:747.8px" width="5" height="14.2" viewBox="0 0 5 14.2"><circle cx="2.2" cy="2.0" r="1.6" fill="#fff" stroke="#4a4a4a" stroke-width=".9"/><circle cx="2.2" cy="7.1" r="1.6" fill="#fff" stroke="#4a4a4a" stroke-width=".9"/><circle cx="2.2" cy="12.2" r="1.6" fill="#fff" stroke="#4a4a4a" stroke-width=".9"/></svg>
<svg style="left:27px;top:798.6px" width="14" height="14" viewBox="0 0 14 14"><polygon points="13.40,6.80 10.10,12.52 3.50,12.52 0.20,6.80 3.50,1.08 10.10,1.08" fill="#0c9216" stroke="#0a8212" stroke-width=".6" stroke-linejoin="round"/><path d="M4.699999999999999 4.4A3.4 3.4 0 1 0 8.9 4.4" fill="none" stroke="#bfe9c5" stroke-width="1.1" stroke-linecap="round"/><path d="M6.8 2.8V6.2" stroke="#bfe9c5" stroke-width="1.1" stroke-linecap="round"/></svg>
<svg style="left:278.4px;top:705.2px" width="14" height="14" viewBox="0 0 14 14"><rect x="1" y="1" width="11.2" height="8.8" rx="1" fill="#fff" stroke="#2f62ad" stroke-width="1.7"/><path d="M3.4 4H8.6M3.4 6.6H7" stroke="#34528f" stroke-width="1"/><path d="M4.6 10.6H8.6V11.8H4.6ZM2.4 11.8H10.8V13H2.4Z" fill="#2f62ad"/></svg>
<svg style="left:347.4px;top:708.6px" width="9" height="9" viewBox="0 0 9 9"><path d="M.3 .3L8.7 8.7M8.7 .3L.3 8.7" stroke="#1a1a1a" stroke-width="1"/></svg>
<svg style="left:368px;top:704.6px" width="15" height="16" viewBox="0 0 15 16"><path d="M.8 .8H13C12.2 3 14.2 5 13.2 7.4C12.4 10 14.4 12 13.4 14.4H.8Z" fill="#dfeaf8" stroke="#8a9cc0" stroke-width=".9"/><path d="M8.8 1V14.2M1 7.6H13" stroke="#9aaacc" stroke-width=".8"/><circle cx="4.8" cy="4.3" r="2.8" fill="#e8242c"/><circle cx="4.2" cy="3.6" r="1" fill="#f88" opacity=".7"/><path d="M4.8 9L7.8 13.8H1.8Z" fill="#f8b83c" stroke="#d8921c" stroke-width=".6"/></svg>
<svg style="left:517.4px;top:704px" width="16" height="17" viewBox="0 0 16 17"><path d="M1 .8H8L10.6 3.4V12.6H1Z" fill="#f4f6fb" stroke="#c49a3c" stroke-width="1"/><path d="M5.6 5.6H8.6M5.6 7.6H8.6" stroke="#4f74c0" stroke-width="1"/><path d="M4.6 3.4C3.4 3.4 3.8 6 2.8 6.6C3.8 7.2 3.4 9.8 4.6 9.8" stroke="#5a7ac0" stroke-width=".8" fill="none"/><path d="M6 12H10.6V10L14.6 13L10.6 16V14H6Z" fill="#fbd66a" stroke="#b8862c" stroke-width=".8" stroke-linejoin="round"/></svg>
<svg style="left:1528px;top:703px" width="16" height="16" viewBox="0 0 16 16"><path d="M3 8.6C3 5.4 6 3.6 8.6 4.6L8 2.4L12.6 5L8.8 8.2L9 6.2C7 5.6 5 6.8 5 8.6ZM13 7.4C13 10.6 10 12.4 7.4 11.4L8 13.6L3.4 11L7.2 7.8L7 9.8C9 10.4 11 9.2 11 7.4Z" fill="#e2e2e2" stroke="#c6c6c6" stroke-width=".6"/></svg>
<svg style="left:1552.4px;top:706px" width="12" height="12" viewBox="0 0 12 12"><rect x=".6" y=".6" width="10.4" height="10.4" rx=".8" fill="#b4b4b4" stroke="#d4d4d4" stroke-width="1.2"/><rect x="2.4" y="2.4" width="6.8" height="6.8" fill="#a6a6a6"/></svg>
<svg style="left:1574.4px;top:704.8px" width="14" height="14" viewBox="0 0 14 14"><path d="M2 2L12 12M12 2L2 12" stroke="#686868" stroke-width="3.3" stroke-linecap="round"/></svg>
<svg style="left:1596px;top:704px" width="16" height="16" viewBox="0 0 16 16"><path d="M2 1.6L10.4 10M10.4 1.6L2 10" stroke="#8a8a8a" stroke-width="2.6" stroke-linecap="round" stroke-dasharray="1.2 .8"/><path d="M5.4 5.2L14 13.8M14 5.2L5.4 13.8" stroke="#686868" stroke-width="3" stroke-linecap="round"/></svg>
<div style="left:1617.5px;top:703px;width:1px;height:17.5px;background:#8a8a8a;"></div>
<svg style="left:1626.8px;top:703px" width="16" height="16" viewBox="0 0 16 16"><path d="M1 .8H8L10.6 3.4V13H1Z" fill="#fefdf6" stroke="#d0b468" stroke-width=".9"/><path d="M2.8 4H7M2.8 6H8.6M2.8 8H8.6M2.8 10H6" stroke="#5f82c4" stroke-width=".9"/><path d="M9 9.6L14.6 15.2M14.6 9.6L9 15.2" stroke="#444" stroke-width="2.2"/></svg>
<svg style="left:1649.6px;top:703px" width="16" height="16" viewBox="0 0 16 16"><rect x="3" y="1" width="12" height="12.6" fill="#e8f0fa" stroke="#7f98c8" stroke-width=".9"/><rect x="11.4" y="1" width="3.6" height="12.6" fill="#c4d4ec" stroke="#7f98c8" stroke-width=".7"/><rect x="12.2" y="2.6" width="2" height="2.6" fill="#5f82c4"/><rect x="12.2" y="9.6" width="2" height="2.6" fill="#5f82c4"/><rect x=".8" y="8.8" width="8" height="6.4" rx=".8" fill="#f2b82c" stroke="#b8820c" stroke-width=".9"/><path d="M2.6 8.8V7C2.6 4.4 7 4.4 7 7V8.8" fill="none" stroke="#c89a2c" stroke-width="1.3"/></svg>
<svg style="left:1672px;top:703px" width="16" height="16" viewBox="0 0 16 16"><path d="M1 .8H8L10.6 3.4V13H1Z" fill="#fefdf6" stroke="#d0b468" stroke-width=".9"/><path d="M2.8 4H7M2.8 6H8.6M2.8 8H6M2.8 10H5" stroke="#5f82c4" stroke-width=".9"/><path d="M15 2.6V9.6H10.6V12L6.6 8.6L10.6 5.2V7.4H12.6V2.6Z" fill="#fce08c" stroke="#c4922c" stroke-width=".8" stroke-linejoin="round"/></svg>
<svg style="left:1694px;top:703.6px" width="16" height="16" viewBox="0 0 16 16"><rect x="4.2" y="1" width="11" height="7.6" rx=".8" fill="#fff" stroke="#5f8fd0" stroke-width="1.2"/><path d="M6.4 3.6H13M6.4 5.8H11" stroke="#7a8fb4" stroke-width=".9"/><path d="M1.4 6V11.4H8.4" fill="none" stroke="#3f6fb8" stroke-width="1.3"/><path d="M3 12.2H7.4V13.6H3ZM1.6 13.6H8.8V14.8H1.6Z" fill="#2f62ad"/></svg>
<svg style="left:1717px;top:703.6px" width="16" height="16" viewBox="0 0 16 16"><rect x="4.2" y="1" width="11" height="7.6" rx=".8" fill="#fff" stroke="#5f8fd0" stroke-width="1.2"/><path d="M6.6 2.6L10 6.6M10 2.6L6.6 6.6" stroke="#e0242c" stroke-width="1.5"/><path d="M11.4 3.6H13.6M11.4 5.8H13.6" stroke="#9ab0d4" stroke-width=".9"/><path d="M1.4 6V11.4H8.4" fill="none" stroke="#3f6fb8" stroke-width="1.3"/><path d="M3 12.2H7.4V13.6H3ZM1.6 13.6H8.8V14.8H1.6Z" fill="#2f62ad"/></svg>
<div style="left:1738.5px;top:703px;width:1px;height:17.5px;background:#8a8a8a;"></div>
<svg style="left:1748.6px;top:704px" width="16" height="16" viewBox="0 0 16 16"><rect x=".8" y="4.6" width="12.4" height="9.8" fill="url(#gWin)" stroke="#6f88b4" stroke-width=".9"/><rect x=".4" y="4.2" width="13.2" height="2.6" fill="#3f82cc"/><path d="M7.6 9.6L10.4 5.4" stroke="#555" stroke-width="1"/><ellipse cx="11.8" cy="3" rx="3.2" ry="2.4" transform="rotate(-35 11.8 3)" fill="#3fa048" stroke="#2a7d34" stroke-width=".7"/></svg>
<svg style="left:1772.4px;top:704.4px" width="14" height="14" viewBox="0 0 14 14"><rect x="1" y="1" width="11.6" height="9.2" rx="1" fill="#f6f6f6" stroke="#a6a6a6" stroke-width="1.6"/><path d="M3.4 4H9M3.4 6.6H7.4" stroke="#9a9a9a" stroke-width="1"/><path d="M4.8 11H8.8V12.2H4.8ZM2.6 12.2H11V13.4H2.6Z" fill="#a6a6a6"/></svg>
<svg style="left:1793.2px;top:710px" width="8" height="4" viewBox="0 0 8 4"><path d="M0 0H7.4L3.7 3.8Z" fill="#8a8a8a"/></svg>
<svg style="left:1808.4px;top:703.4px" width="17" height="16" viewBox="0 0 17 16"><rect x=".8" y="3.4" width="12.8" height="11.4" fill="url(#gWin)" stroke="#8f7e52" stroke-width=".9"/><rect x=".4" y="3" width="13.6" height="2.6" fill="#4892d4"/><path d="M4 14C8 13.6 10.4 11 10.8 7" stroke="#f2dc9a" stroke-width="1.2" fill="none"/><path d="M12.4 0.5L13.72 2.4799999999999995L15.7 3.8L13.72 5.12L12.4 7.1L11.08 5.12L9.100000000000001 3.8L11.08 2.4799999999999995Z" fill="#fff8d6" stroke="#c9a03c" stroke-width=".9" stroke-linejoin="round"/></svg>
<svg style="left:1830.6px;top:710px" width="8" height="4" viewBox="0 0 8 4"><path d="M0 0H7.4L3.7 3.8Z" fill="#1c1c1c"/></svg>
<div style="left:1847.4px;top:706.4px;width:8px;height:2px;border:1px solid #111;background:#fff"></div>
<div style="left:1869.8px;top:706.4px;width:8px;height:8px;border:1px solid #111;background:#fbfbfb;box-shadow:inset 0 1px 0 #fbfbfb, inset 0 2px 0 #111"></div>
<svg style="left:1876px;top:747px" width="8" height="6" viewBox="0 0 8 6"><path d="M0 6L4 0L8 6Z" fill="#a3a3a3"/></svg>
<svg style="left:1877px;top:960px" width="8" height="6" viewBox="0 0 8 6"><path d="M0 0H8L4 6Z" fill="#a3a3a3"/></svg>
<svg style="left:275px;top:975.4px" width="6" height="8" viewBox="0 0 6 8"><path d="M6 0V8L0 4Z" fill="#a3a3a3"/></svg>
<svg style="left:1862px;top:975.4px" width="6" height="8" viewBox="0 0 6 8"><path d="M0 0L6 4L0 8Z" fill="#a3a3a3"/></svg>
<svg style="left:1582px;top:995px" width="2" height="16" viewBox="0 0 2 16"><rect x="0" y="0" width="2" height="2" fill="#bfb49c"/><rect x="0" y="4" width="2" height="2" fill="#bfb49c"/><rect x="0" y="8" width="2" height="2" fill="#bfb49c"/><rect x="0" y="12" width="2" height="2" fill="#bfb49c"/></svg>
<svg style="left:1864px;top:995px" width="2" height="16" viewBox="0 0 2 16"><rect x="0" y="0" width="2" height="2" fill="#bfb49c"/><rect x="0" y="4" width="2" height="2" fill="#bfb49c"/><rect x="0" y="8" width="2" height="2" fill="#bfb49c"/><rect x="0" y="12" width="2" height="2" fill="#bfb49c"/></svg>
<svg style="left:1873.4px;top:993.6px" width="12" height="16" viewBox="0 0 12 16"><path d="M6 .8C9 .8 11 3 11 5.6C11 7.8 9.2 8.8 8.8 10.8H3.2C2.8 8.8 1 7.8 1 5.6C1 3 3 .8 6 .8Z" fill="#fde9a8" stroke="#f2c86a" stroke-width=".9"/><path d="M3.6 11.4H8.4V13.4L7.4 15.2H4.6L3.6 13.4Z" fill="#aab4c4"/><path d="M3.6 12.6H8.4" stroke="#7a8494" stroke-width=".7"/></svg>
<svg style="left:0;top:0" width="1896" height="1016" viewBox="0 0 1896 1016"><rect x="4.00" y="51.90" width="259.80" height="644.10" fill="none" stroke="#ff0000" stroke-width="3.8" stroke-linejoin="round"/><rect x="270.50" y="51.90" width="1213.60" height="644.10" fill="none" stroke="#ff0000" stroke-width="3.8" stroke-linejoin="round"/><rect x="1485.90" y="51.90" width="404.20" height="644.10" fill="none" stroke="#ff0000" stroke-width="3.8" stroke-linejoin="round"/><rect x="270.50" y="695.90" width="1617.80" height="287.20" fill="none" stroke="#ff0000" stroke-width="3.8" stroke-linejoin="round"/></svg>
<div style="left:76px;top:292px;width:132.3px;height:39px;background:#ffff00;"></div>
<div style="left:76px;top:330.5px;width:127.19999999999999px;height:38.5px;background:#ffff00;"></div>
<div style="left:768px;top:292px;width:239.29999999999995px;height:38px;background:#ffff00;"></div>
<div style="left:1648px;top:340px;width:108.09999999999991px;height:37px;background:#ffff00;"></div>
<div style="left:905px;top:834px;width:346.20000000000005px;height:37.799999999999955px;background:#ffff00;"></div>
<span class="t" style="left:7.6000000000000005px;top:6.84px;font-size:12px;line-height:16px;color:#000;letter-spacing:-0.148px;">File</span>
<span class="t" style="left:38.8px;top:6.84px;font-size:12px;line-height:16px;color:#000;letter-spacing:0.071px;">Edit</span>
<span class="t" style="left:72.3px;top:6.84px;font-size:12px;line-height:16px;color:#000;letter-spacing:-0.226px;">Source</span>
<span class="t" style="left:121.3px;top:6.84px;font-size:12px;line-height:16px;color:#000;letter-spacing:-0.066px;">Refactor</span>
<span class="t" style="left:178.8px;top:6.84px;font-size:12px;line-height:16px;color:#000;">Navigate</span>
<span class="t" style="left:238.3px;top:6.84px;font-size:12px;line-height:16px;color:#000;letter-spacing:-0.426px;">Search</span>
<span class="t" style="left:286.8px;top:6.84px;font-size:12px;line-height:16px;color:#000;letter-spacing:0.090px;">Project</span>
<span class="t" style="left:337.3px;top:6.84px;font-size:12px;line-height:16px;color:#000;letter-spacing:-0.308px;">Run</span>
<span class="t" style="left:371.3px;top:6.84px;font-size:12px;line-height:16px;color:#000;letter-spacing:0.442px;">Window</span>
<span class="t" style="left:428.8px;top:6.84px;font-size:12px;line-height:16px;color:#000;letter-spacing:0.071px;">Help</span>
<span class="t" style="left:24.7px;top:58.54px;font-size:12px;line-height:16px;color:#000;letter-spacing:-0.395px;">Package Explorer</span>
<span class="t" style="left:40.599999999999994px;top:101.84px;font-size:12px;line-height:16px;color:#000;letter-spacing:0.226px;">HelloWorld</span>
<span class="t" style="left:56.099999999999994px;top:119.84px;font-size:12px;line-height:16px;color:#000;letter-spacing:-0.598px;">JRE System Library <span style="color:#9c8044">[JavaSE-17]</span></span>
<span class="t" style="left:56.099999999999994px;top:137.84px;font-size:12px;line-height:16px;color:#000;letter-spacing:-0.050px;">src</span>
<span class="t" style="left:72.0px;top:155.84px;font-size:12px;line-height:16px;color:#000;letter-spacing:0.278px;">fr.formation.mer</span>
<span class="t" style="left:88.1px;top:173.84px;font-size:12px;line-height:16px;color:#000;letter-spacing:-0.015px;">HelloWorld.java</span>
<span class="t" style="left:103.6px;top:191.84px;font-size:12px;line-height:16px;color:#000;letter-spacing:0.203px;">HelloWorld</span>
<span class="t" style="left:119.8px;top:209.84px;font-size:12px;line-height:16px;color:#000;letter-spacing:0.053px;">main(String[]) : void</span>
<span class="t" style="left:72.6px;top:227.84px;font-size:12px;line-height:16px;color:#000;letter-spacing:0.149px;">module-info.java</span>
<span class="t" style="left:295.3px;top:58.84px;font-size:12px;line-height:16px;color:#000;letter-spacing:-0.029px;">HelloWorld.java</span>
<span class="t m" style="left:310px;top:80.75px;font-size:12px;line-height:15px;color:#000;letter-spacing:-0.3px;"><b style="color:#7f0055">package</b> fr.formation.mer;</span>
<span class="t m" style="left:291.5px;top:80.75px;font-size:12px;line-height:15px;color:#787878;letter-spacing:-0.3px;">1</span>
<span class="t m" style="left:291.5px;top:95.75px;font-size:12px;line-height:15px;color:#787878;letter-spacing:-0.3px;">2</span>
<span class="t m" style="left:310px;top:110.75px;font-size:12px;line-height:15px;color:#000;letter-spacing:-0.3px;"><span style="color:#3f5fbf">/**</span></span>
<span class="t m" style="left:291.5px;top:110.75px;font-size:12px;line-height:15px;color:#787878;letter-spacing:-0.3px;">3</span>
<span class="t m" style="left:310px;top:125.75px;font-size:12px;line-height:15px;color:#000;letter-spacing:-0.3px;"><span style="color:#3f5fbf"> * Pour lancer <span style="text-decoration:underline wavy #f2a272 1px;text-underline-offset:-1.5px;text-decoration-skip-ink:none">ce</span> <span style="text-decoration:underline wavy #f2a272 1px;text-underline-offset:-1.5px;text-decoration-skip-ink:none">programme</span> <span style="text-decoration:underline wavy #f2a272 1px;text-underline-offset:-1.5px;text-decoration-skip-ink:none">en</span> <span style="text-decoration:underline wavy #f2a272 1px;text-underline-offset:-1.5px;text-decoration-skip-ink:none">ligne</span> <span style="text-decoration:underline wavy #f2a272 1px;text-underline-offset:-1.5px;text-decoration-skip-ink:none">de</span> <span style="text-decoration:underline wavy #f2a272 1px;text-underline-offset:-1.5px;text-decoration-skip-ink:none">commande</span> <span style="text-decoration:underline wavy #f2a272 1px;text-underline-offset:-1.5px;text-decoration-skip-ink:none">dans</span> <span style="text-decoration:underline wavy #f2a272 1px;text-underline-offset:-1.5px;text-decoration-skip-ink:none">le</span> terminal</span></span>
<span class="t m" style="left:291.5px;top:125.75px;font-size:12px;line-height:15px;color:#787878;letter-spacing:-0.3px;">4</span>
<span class="t m" style="left:310px;top:140.75px;font-size:12px;line-height:15px;color:#000;letter-spacing:-0.3px;"><span style="color:#3f5fbf"> * <span style="text-decoration:underline wavy #f2a272 1px;text-underline-offset:-1.5px;text-decoration-skip-ink:none">Il</span> <span style="text-decoration:underline wavy #f2a272 1px;text-underline-offset:-1.5px;text-decoration-skip-ink:none">faut</span> <span style="text-decoration:underline wavy #f2a272 1px;text-underline-offset:-1.5px;text-decoration-skip-ink:none">se</span> <span style="text-decoration:underline wavy #f2a272 1px;text-underline-offset:-1.5px;text-decoration-skip-ink:none">positionner</span> <span style="text-decoration:underline wavy #f2a272 1px;text-underline-offset:-1.5px;text-decoration-skip-ink:none">dans</span> <span style="text-decoration:underline wavy #f2a272 1px;text-underline-offset:-1.5px;text-decoration-skip-ink:none">le</span> <span style="text-decoration:underline wavy #f2a272 1px;text-underline-offset:-1.5px;text-decoration-skip-ink:none">répertoire</span> <span style="text-decoration:underline wavy #f2a272 1px;text-underline-offset:-1.5px;text-decoration-skip-ink:none">du</span> <span style="text-decoration:underline wavy #f2a272 1px;text-underline-offset:-1.5px;text-decoration-skip-ink:none">fchier</span> java <span style="text-decoration:underline wavy #f2a272 1px;text-underline-offset:-1.5px;text-decoration-skip-ink:none">compilé</span> (<span style="text-decoration:underline wavy #f2a272 1px;text-underline-offset:-1.5px;text-decoration-skip-ink:none">le</span> &quot;.class&quot;)</span></span>
<span class="t m" style="left:291.5px;top:140.75px;font-size:12px;line-height:15px;color:#787878;letter-spacing:-0.3px;">5</span>
<span class="t m" style="left:310px;top:155.75px;font-size:12px;line-height:15px;color:#000;letter-spacing:-0.3px;"><span style="color:#3f5fbf"> * D:\mer-Eclipse\HelloWorld\bin&gt;java fr.formation.mer.HelloWorld</span></span>
<span class="t m" style="left:291.5px;top:155.75px;font-size:12px;line-height:15px;color:#787878;letter-spacing:-0.3px;">6</span>
<span class="t m" style="left:310px;top:170.75px;font-size:12px;line-height:15px;color:#000;letter-spacing:-0.3px;"><span style="color:#3f5fbf"> */</span></span>
<span class="t m" style="left:291.5px;top:170.75px;font-size:12px;line-height:15px;color:#787878;letter-spacing:-0.3px;">7</span>
<span class="t m" style="left:310px;top:185.75px;font-size:12px;line-height:15px;color:#000;letter-spacing:-0.3px;"><b style="color:#7f0055">public</b> <b style="color:#7f0055">class</b> HelloWorld {</span>
<span class="t m" style="left:291.5px;top:185.75px;font-size:12px;line-height:15px;color:#787878;letter-spacing:-0.3px;">8</span>
<span class="t m" style="left:291.5px;top:200.75px;font-size:12px;line-height:15px;color:#787878;letter-spacing:-0.3px;">9</span>
<span class="t m" style="left:310px;top:215.75px;font-size:12px;line-height:15px;color:#000;letter-spacing:-0.3px;">    <b style="color:#7f0055">public</b> <b style="color:#7f0055">static</b> <b style="color:#7f0055">void</b> main(String[] <span style="color:#6a3e3e">args</span>) {</span>
<span class="t m" style="left:284.59999999999997px;top:215.75px;font-size:12px;line-height:15px;color:#787878;letter-spacing:-0.3px;">10</span>
<span class="t m" style="left:284.59999999999997px;top:230.75px;font-size:12px;line-height:15px;color:#787878;letter-spacing:-0.3px;">11</span>
<span class="t m" style="left:310px;top:245.75px;font-size:12px;line-height:15px;color:#000;letter-spacing:-0.3px;">        System.<b style="color:#0000c0;font-style:italic">out</b>.println(<span style="color:#2a00ff">&quot;Bonjour les Cobolistes !&quot;</span>);</span>
<span class="t m" style="left:284.59999999999997px;top:245.75px;font-size:12px;line-height:15px;color:#787878;letter-spacing:-0.3px;">12</span>
<span class="t m" style="left:310px;top:260.75px;font-size:12px;line-height:15px;color:#000;letter-spacing:-0.3px;">    }</span>
<span class="t m" style="left:284.59999999999997px;top:260.75px;font-size:12px;line-height:15px;color:#787878;letter-spacing:-0.3px;">13</span>
<span class="t m" style="left:310px;top:275.75px;font-size:12px;line-height:15px;color:#000;letter-spacing:-0.3px;">}</span>
<span class="t m" style="left:284.59999999999997px;top:275.75px;font-size:12px;line-height:15px;color:#787878;letter-spacing:-0.3px;">14</span>
<span class="t m" style="left:284.59999999999997px;top:290.75px;font-size:12px;line-height:15px;color:#787878;letter-spacing:-0.3px;">15</span>
<span class="t" style="left:1511.3px;top:58.34px;font-size:12px;line-height:16px;color:#000;letter-spacing:0.228px;">Outline</span>
<span class="t" style="left:1598.3px;top:58.34px;font-size:12px;line-height:16px;color:#000;letter-spacing:-0.211px;">Task List</span>
<span class="t" style="left:1538.8999999999999px;top:79.34px;font-size:12px;line-height:16px;color:#000;letter-spacing:0.271px;">fr.formation.mer</span>
<span class="t" style="left:1539.1px;top:97.34px;font-size:12px;line-height:16px;color:#000;letter-spacing:0.159px;">HelloWorld</span>
<span class="t" style="left:1554.8999999999999px;top:115.54px;font-size:12px;line-height:16px;color:#000;letter-spacing:0.048px;">main(String[]) <span style="color:#9c8044">: void</span></span>
<span class="t" style="left:1544.3px;top:114.81px;font-size:9.5px;line-height:10px;color:#e0305a;font-weight:bold;letter-spacing:-0.044px;">S</span>
<span class="t" style="left:24.6px;top:701.84px;font-size:12px;line-height:16px;color:#000;letter-spacing:-0.149px;">Boot Dashboard</span>
<span class="t" style="left:12.8px;top:773.84px;font-size:12px;line-height:16px;color:#6a6a6a;letter-spacing:-0.165px;">Type tags, projects, or working set names to ma</span>
<span class="t" style="left:45.699999999999996px;top:798.24px;font-size:12px;line-height:16px;color:#000;font-weight:bold;letter-spacing:-0.365px;">local</span>
<span class="t" style="left:295.3px;top:704.74px;font-size:12px;line-height:16px;color:#000;letter-spacing:-0.055px;">Console</span>
<span class="t" style="left:387.3px;top:704.74px;font-size:12px;line-height:16px;color:#000;letter-spacing:-0.113px;">Problems</span>
<span class="t" style="left:465.8px;top:704.74px;font-size:12px;line-height:16px;color:#000;letter-spacing:-0.467px;">Javadoc</span>
<span class="t" style="left:536.0px;top:704.74px;font-size:12px;line-height:16px;color:#000;letter-spacing:-0.120px;">Declaration</span>
<span class="t" style="left:449.2px;top:703.82px;font-size:11.5px;line-height:16px;color:#3b77c8;font-weight:bold;font-style:italic;letter-spacing:0.181px;">@</span>
<span class="t" style="left:273.3px;top:724.02px;font-size:11.5px;line-height:16px;color:#000;">&lt;terminated&gt; HelloWorld [Java Application] C:\Program Files\Java\jdk-17\bin\javaw.exe  (16 févr. 2026, 11:59:28 – 11:59:30 elapsed: 0:00:02.104) [pid: 29004]</span>
<span class="t m" style="left:275px;top:742.75px;font-size:12px;line-height:15px;color:#000;letter-spacing:-0.3px;">Bonjour les Cobolistes !</span>
<span class="t" style="left:3.8px;top:992.24px;font-size:12px;line-height:16px;color:#000;letter-spacing:0.123px;">fr.formation.mer.HelloWorld - HelloWorld/src</span>
<span class="t" style="left:76px;top:291.48px;font-size:34.1px;line-height:38px;color:#000;letter-spacing:-0.046px;">Package</span>
<span class="t" style="left:76px;top:329.68px;font-size:34.1px;line-height:38px;color:#000;letter-spacing:0.037px;">Explorer</span>
<span class="t" style="left:768px;top:290.58px;font-size:34.1px;line-height:38px;color:#000;letter-spacing:0.039px;">Éditeur de code</span>
<span class="t" style="left:1648px;top:338.98px;font-size:34.1px;line-height:38px;color:#000;letter-spacing:0.017px;">Outline</span>
<span class="t" style="left:905px;top:833.28px;font-size:34.1px;line-height:38px;color:#000;letter-spacing:-0.018px;">Console (entrée/sortie)</span>
</body></html>
